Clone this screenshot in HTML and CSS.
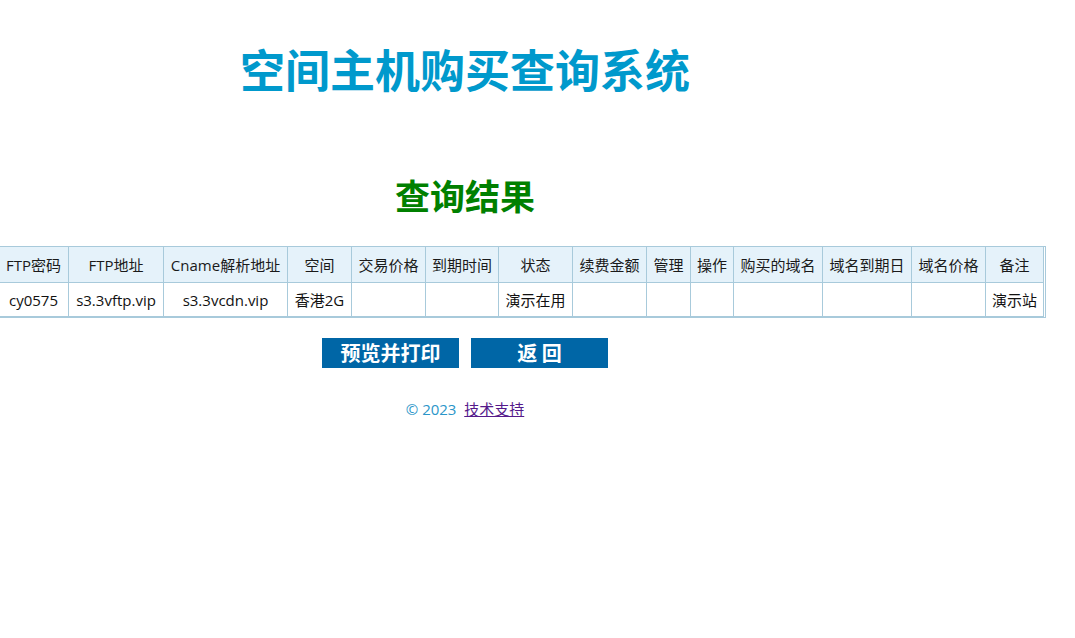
FILE: index.html
```html
<!DOCTYPE html>
<html lang="zh-CN">
<head>
<meta charset="utf-8">
<title>空间主机购买查询系统</title>
<link rel="stylesheet" href="styles.css">
</head>
<body>
<div class="page">
  <h1 class="title">空间主机购买查询系统</h1>
  <h2 class="subtitle">查询结果</h2>
  <table class="result">
    <thead>
      <tr>
        <th class="w114"></th>
        <th class="w70">FTP密码</th>
        <th class="w95">FTP地址</th>
        <th class="w124">Cname解析地址</th>
        <th class="w64">空间</th>
        <th class="w74">交易价格</th>
        <th class="w73">到期时间</th>
        <th class="w74">状态</th>
        <th class="w74">续费金额</th>
        <th class="w44">管理</th>
        <th class="w43">操作</th>
        <th class="w89">购买的域名</th>
        <th class="w89">域名到期日</th>
        <th class="w74">域名价格</th>
        <th class="w58">备注</th>
      </tr>
    </thead>
    <tbody>
      <tr>
        <td></td>
        <td>cy0575</td>
        <td>s3.3vftp.vip</td>
        <td>s3.3vcdn.vip</td>
        <td>香港2G</td>
        <td></td>
        <td></td>
        <td>演示在用</td>
        <td></td>
        <td></td>
        <td></td>
        <td></td>
        <td></td>
        <td></td>
        <td>演示站</td>
      </tr>
    </tbody>
  </table>
  <div class="actions">
    <button class="btn" type="button">预览并打印</button>
    <button class="btn" type="button">返 回</button>
  </div>
  <p class="footer">© 2023&nbsp; <a class="support" href="#">技术支持</a></p>
</div>
</body>
</html>
```
FILE: styles.css
```css
html, body {
  margin: 0;
  padding: 0;
  background: #ffffff;
}
body {
  font-family: "Open Sans", "Noto Sans CJK SC", sans-serif;
  font-size: 15px;
  color: #1a1a1a;
  overflow: hidden;
}
.page {
  width: 930px;
  display: flex;
  flex-direction: column;
  align-items: center;
}
.title {
  margin: 39px 0 0;
  font-family: "Noto Sans CJK SC", sans-serif;
  font-size: 45px;
  line-height: 60px;
  font-weight: 700;
  color: #0099cc;
  white-space: nowrap;
}
.subtitle {
  margin: 73px 0 0;
  font-family: "Noto Sans CJK SC", sans-serif;
  font-size: 35px;
  line-height: 45px;
  font-weight: 700;
  color: #008000;
}
.result {
  flex: none;
  margin-top: 29px;
  width: 1162px;
  table-layout: fixed;
  border-collapse: separate;
  border-spacing: 0;
  border: 1px solid #a8cadb;
  padding: 0 1px 0 0;
}
.result th,
.result td {
  box-sizing: border-box;
  padding: 0 3px;
  border-right: 1px solid #a8cadb;
  border-bottom: 1px solid #a8cadb;
  text-align: center;
  white-space: nowrap;
  overflow: hidden;
  font-weight: 400;
  font-size: 15px;
}
.result th {
  height: 36px;
  background: #e5f2fa;
  color: #1a1a1a;
}
.result td {
  height: 34px;
  color: #111111;
}
.w43 { width: 43px; }
.w44 { width: 44px; }
.w58 { width: 58px; }
.w64 { width: 64px; }
.w70 { width: 70px; }
.w73 { width: 73px; }
.w74 { width: 74px; }
.w89 { width: 89px; }
.w95 { width: 95px; }
.w114 { width: 114px; }
.w124 { width: 124px; }
.actions {
  display: flex;
  gap: 12px;
  margin-top: 20px;
}
.btn {
  width: 137px;
  height: 30px;
  padding: 0;
  border: 0;
  background: #0066a6;
  color: #ffffff;
  font-family: "Noto Sans CJK SC", sans-serif;
  font-size: 20px;
  font-weight: 700;
  line-height: 30px;
  cursor: pointer;
}
.footer {
  margin: 31px 0 0;
  line-height: 20px;
  color: #2a96c9;
  font-size: 15px;
}
.support {
  color: #551a8b;
  text-decoration: underline;
}
```
